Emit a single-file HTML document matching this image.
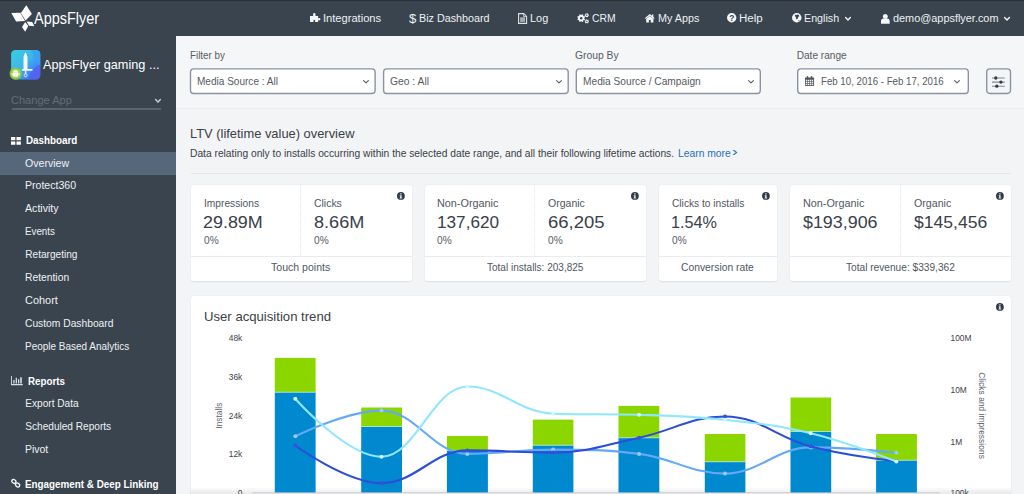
<!DOCTYPE html>
<html lang="en"><head><meta charset="utf-8"><title>AppsFlyer - Overview</title><style>
*{box-sizing:border-box}
html,body{margin:0;padding:0}
body{width:1024px;height:494px;overflow:hidden;position:relative;background:#f3f4f6;font-family:"Liberation Sans",sans-serif}
.t{position:absolute;white-space:nowrap;transform-origin:0 50%;line-height:14px;margin:0;font-weight:400;text-decoration:none}
.i{position:absolute;overflow:visible}
header{position:absolute;left:0;top:0;width:1024px;height:35.6px;background:#3a444f;box-shadow:inset 0 1px 0 #2b3138}
aside{position:absolute;left:0;top:0;width:176px;height:494px;background:#3a444f}
ul{margin:0;padding:0;list-style:none}
main,section,nav{display:block}
.active{position:absolute;left:0;top:152.2px;width:176px;height:22.6px;background:#57677b}
.underline{position:absolute;left:11.500px;top:108px;width:149.800px;height:2px;background:#586370}
.filterbar{position:absolute;left:176px;top:35.6px;width:848px;height:73.4px;background:#f5f6f8;border-bottom:1px solid #e9ebee}
hr{position:absolute;left:190.500px;top:172.600px;width:820.500px;height:1px;border:0;margin:0;background:#e3e5e8}
.card{position:absolute;top:184.600px;height:96px;background:#fff;border-radius:3px;box-shadow:0 0.5px 1.5px rgba(40,50,60,.10)}
.vd{position:absolute;top:184.600px;height:71.600px;width:0;border-left:1px dotted #e3e6e9}
.hd{position:absolute;top:256px;height:1px;background:#e9ebee}
.chartcard{position:absolute;left:190.500px;top:296.200px;width:820.500px;height:210px;background:#fff;border-radius:3px;box-shadow:0 0.5px 1.5px rgba(40,50,60,.10)}
</style></head><body>
<aside><div class="active"></div><div class="underline"></div><svg class="i" style="left:9px;top:50px" width="32" height="31" viewBox="9 50 32 31">
<defs><linearGradient id="ag" x1="0" y1="0" x2="1" y2="1"><stop offset="0" stop-color="#35d0df"/><stop offset=".45" stop-color="#3fb6ea"/><stop offset=".75" stop-color="#3b86f2"/><stop offset="1" stop-color="#5a5cf0"/></linearGradient><clipPath id="ac"><rect x="11.100" y="50.100" width="29.200" height="29.400" rx="4.200"/></clipPath></defs>
<rect x="11.100" y="50.100" width="29.200" height="29.400" rx="4.200" fill="url(#ag)"/>
<g clip-path="url(#ac)"><path d="M30 50 C36 55 33 64 41 66 V50z" fill="#3aa0f4" opacity=".8"/><path d="M28 80 C30 70 36 66 41 64 V80z" fill="#5561ee" opacity=".85"/></g>
<path d="M25.500 52.600 C26.800 54.500 27.500 56 27.500 58 V69 H23.500 V58 C23.500 56 24.200 54.500 25.500 52.600z" fill="#f3f7ff"/>
<rect x="21.800" y="69" width="10.800" height="1.700" rx=".8" fill="#f3f7ff"/><rect x="24.800" y="70.500" width="1.600" height="3.600" fill="#e4ecff"/><circle cx="25.600" cy="75.300" r="1.500" fill="none" stroke="#e4ecff" stroke-width=".9"/>
<circle cx="15.700" cy="73.600" r="6.100" fill="#8dc73f"/><circle cx="15.700" cy="73.600" r="4.600" fill="#a4d455"/>
<path d="M13 72.700a2.600 2.700 0 0 1 5.200 0z M13 73.100h5.200v3a.6.6 0 0 1-.6.600h-4a.6.6 0 0 1-.600-.600z" fill="#f4fbe8"/><rect x="11.700" y="73.100" width=".950" height="2.700" rx=".450" fill="#f4fbe8"/><rect x="18.550" y="73.100" width=".950" height="2.700" rx=".450" fill="#f4fbe8"/>
</svg><span class="t" style="left:43.24px;top:58.00px;font-size:12.6px;color:#fff;transform:scaleX(1.009);">AppsFlyer gaming ...</span><span class="t" style="left:11.06px;top:93.00px;font-size:10.6px;color:#606c78;transform:scaleX(1.042);">Change App</span><ul><li class="t" style="left:25.69px;top:133.50px;font-size:10.1px;color:#fff;font-weight:700;transform:scaleX(0.973);">Dashboard</li><li class="t" style="left:25.29px;top:156.50px;font-size:10.1px;color:#eef1f4;transform:scaleX(1.048);">Overview</li><li class="t" style="left:25.29px;top:178.50px;font-size:10.1px;color:#eef1f4;transform:scaleX(1.045);">Protect360</li><li class="t" style="left:25.29px;top:201.50px;font-size:10.1px;color:#eef1f4;transform:scaleX(1.051);">Activity</li><li class="t" style="left:25.29px;top:224.50px;font-size:10.1px;color:#eef1f4;transform:scaleX(0.969);">Events</li><li class="t" style="left:25.29px;top:247.50px;font-size:10.1px;color:#eef1f4;">Retargeting</li><li class="t" style="left:25.29px;top:270.50px;font-size:10.1px;color:#eef1f4;transform:scaleX(1.021);">Retention</li><li class="t" style="left:25.29px;top:293.50px;font-size:10.1px;color:#eef1f4;transform:scaleX(1.083);">Cohort</li><li class="t" style="left:25.29px;top:316.50px;font-size:10.1px;color:#eef1f4;transform:scaleX(1.017);">Custom Dashboard</li><li class="t" style="left:25.29px;top:339.50px;font-size:10.1px;color:#eef1f4;transform:scaleX(0.987);">People Based Analytics</li><li class="t" style="left:27.69px;top:374.50px;font-size:10.1px;color:#fff;font-weight:700;transform:scaleX(0.968);">Reports</li><li class="t" style="left:25.29px;top:396.50px;font-size:10.1px;color:#eef1f4;">Export Data</li><li class="t" style="left:25.29px;top:419.50px;font-size:10.1px;color:#eef1f4;">Scheduled Reports</li><li class="t" style="left:25.29px;top:442.50px;font-size:10.1px;color:#eef1f4;transform:scaleX(1.034);">Pivot</li><li class="t" style="left:25.29px;top:477.50px;font-size:10.1px;color:#fff;font-weight:700;transform:scaleX(0.976);">Engagement &amp; Deep Linking</li></ul><svg class="i" style="left:155.2px;top:99.0px" width="6.0" height="3.7" viewBox="0 0 6.0 3.7" ><path d="M0.6 0.6 L3.0 3.1 L5.4 0.6" fill="none" stroke="#c3c9d0" stroke-width="1.5" stroke-linecap="round" stroke-linejoin="round"/></svg><svg class="i" style="left:11.1px;top:136.6px" width="9.9" height="7.7" viewBox="0 0 9.900 7.700" ><path fill="#fff" d="M0 0h4.300v3.300h-4.300zM5.500 0h4.400v3.300h-4.400zM0 4.400h4.300v3.300h-4.300zM5.500 4.400h4.400v3.300h-4.400z"/></svg><svg class="i" style="left:11px;top:376.4px" width="11.8" height="9.2" viewBox="0 0 11.800 9.200" ><path fill="#d9dde2" d="M0 0h.9v8h10.900v1.200h-11.800zM2.300 4.100h1.300v3.500h-1.300zM4.700 1.800h1.300v5.800h-1.300zM7 3.300h1.300v4.300h-1.300zM9.200 1.300h1.600v6.300h-1.600z"/></svg><svg class="i" style="left:11px;top:479.4px" width="9.6" height="8.6" viewBox="0 0 9.600 8.600" ><g fill="none" stroke="#fff" stroke-width="1.300"><rect x=".7" y=".7" width="4.400" height="3.400" rx="1.700" transform="rotate(35 2.900 2.400)"/><rect x="4.400" y="4.300" width="4.400" height="3.400" rx="1.700" transform="rotate(35 6.600 6)"/></g></svg></aside>
<header><svg class="i" style="left:11px;top:5px" width="24" height="27" viewBox="11 5 24 27" ><g fill="#fff"><path d="M26.300 5.200 L31.900 14 L25.600 20.400 L20.900 12.900z"/><path d="M11.300 12.900 L20.300 12.700 L25 20.900 L16.100 21.500z"/><path d="M25.200 22 L28.300 26 L25.200 31.700 L22 26.900z"/><path d="M26.500 21.500 L32.200 22 L34.400 26.300 L29.100 25.800z"/></g></svg><span class="t" style="left:34.03px;top:11.00px;font-size:16.2px;color:#fff;transform:scaleX(0.894);">AppsFlyer</span><nav><span class="t" style="left:323.40px;top:11.50px;font-size:10.0px;color:#eef1f4;transform:scaleX(1.112);">Integrations</span><span class="t" style="left:409.44px;top:12.00px;font-size:12.6px;color:#eef1f4;transform:scaleX(1.042);">$</span><span class="t" style="left:419.10px;top:11.50px;font-size:10.0px;color:#eef1f4;transform:scaleX(1.075);">Biz Dashboard</span><span class="t" style="left:530.40px;top:11.50px;font-size:10.0px;color:#eef1f4;transform:scaleX(1.091);">Log</span><span class="t" style="left:592.40px;top:11.50px;font-size:10.0px;color:#eef1f4;transform:scaleX(1.036);">CRM</span><span class="t" style="left:657.70px;top:11.50px;font-size:10.0px;color:#eef1f4;transform:scaleX(1.077);">My Apps</span><span class="t" style="left:739.40px;top:11.50px;font-size:10.0px;color:#eef1f4;transform:scaleX(1.152);">Help</span><span class="t" style="left:804.40px;top:11.50px;font-size:10.0px;color:#eef1f4;transform:scaleX(1.070);">English</span><span class="t" style="left:893.10px;top:11.50px;font-size:10.0px;color:#eef1f4;transform:scaleX(1.089);">demo@appsflyer.com</span><svg class="i" style="left:309.6px;top:13px" width="10.4" height="8.9" viewBox="0 0 10.4 8.9" ><path fill="#f4f6f8" d="M0 3h3.1v-1.6a1.2 1.4 0 1 1 2.4 0v1.6h2.6v2.2h1a1 1.1 0 1 1 0 2.1h-1v1.6h-3v-1.3a0.8 0.9 0 1 0-1.6 0v1.3h-3.5z"/></svg><svg class="i" style="left:517.9px;top:12.9px" width="9.2" height="11" viewBox="0 0 9.200 11" ><path fill="none" stroke="#dde1e5" stroke-width="1.1" d="M0.600 0.600h5.200l2.800 2.800v7h-8z"/><path fill="none" stroke="#dde1e5" stroke-width="0.8" d="M5.600 0.800v2.800h2.800"/><rect x="2.100" y="4.300" width="5" height="4.600" fill="#a4abb3"/></svg><svg class="i" style="left:577px;top:13px" width="12" height="10.5" viewBox="0 0 12 10.5" ><path fill="#f4f6f8" fill-rule="evenodd" d="M7.32 5.64 L8.10 6.07 L7.58 7.34 L6.72 7.09 L6.09 7.72 L6.34 8.58 L5.07 9.10 L4.64 8.32 L3.76 8.32 L3.33 9.10 L2.06 8.58 L2.31 7.72 L1.68 7.09 L0.82 7.34 L0.30 6.07 L1.08 5.64 L1.08 4.76 L0.30 4.33 L0.82 3.06 L1.68 3.31 L2.31 2.68 L2.06 1.82 L3.33 1.30 L3.76 2.08 L4.64 2.08 L5.07 1.30 L6.34 1.82 L6.09 2.68 L6.72 3.31 L7.58 3.06 L8.10 4.33 L7.32 4.76z M5.50 5.20 A1.3 1.3 0 1 0 2.90 5.20 A1.3 1.3 0 1 0 5.50 5.20z M11.36 1.76 L11.89 1.81 L11.89 2.79 L11.36 2.84 L11.05 3.38 L11.27 3.87 L10.42 4.36 L10.11 3.92 L9.49 3.92 L9.18 4.36 L8.33 3.87 L8.55 3.38 L8.24 2.84 L7.71 2.79 L7.71 1.81 L8.24 1.76 L8.55 1.22 L8.33 0.73 L9.18 0.24 L9.49 0.68 L10.11 0.68 L10.42 0.24 L11.27 0.73 L11.05 1.22z M10.50 2.30 A0.7 0.7 0 1 0 9.10 2.30 A0.7 0.7 0 1 0 10.50 2.30z M11.45 8.34 L11.94 8.55 L11.65 9.49 L11.13 9.38 L10.67 9.80 L10.74 10.33 L9.79 10.55 L9.62 10.04 L9.03 9.86 L8.60 10.18 L7.93 9.46 L8.29 9.06 L8.15 8.46 L7.66 8.25 L7.95 7.31 L8.47 7.42 L8.93 7.00 L8.86 6.47 L9.81 6.25 L9.98 6.76 L10.57 6.94 L11.00 6.62 L11.67 7.34 L11.31 7.74z M10.50 8.40 A0.7 0.7 0 1 0 9.10 8.40 A0.7 0.7 0 1 0 10.50 8.40z"/></svg><svg class="i" style="left:644.5px;top:13.9px" width="9.6" height="8.4" viewBox="0 0 9.600 8.400" ><path fill="#f4f6f8" d="M4.800 0L9.600 4 8.800 5 4.800 1.700.800 5 0 4z"/><path fill="#f4f6f8" d="M4.800 2.100L8.400 5.100V8.400H5.700V6H3.900V8.400H1.200V5.100z"/><rect x="6.900" y=".500" width="1.400" height="2.600" fill="#f4f6f8"/></svg><svg class="i" style="left:727.1px;top:13.4px" width="9.4" height="9.4" viewBox="0 0 9.4 9.4" ><circle cx="4.7" cy="4.7" r="4.7" fill="#f4f6f8"/><text x="4.7" y="7.7" font-size="8.4" font-weight="700" text-anchor="middle" fill="#3a444f" font-family="Liberation Sans, sans-serif">?</text></svg><svg class="i" style="left:791.8px;top:13.2px" width="9.5" height="9.5" viewBox="0 0 9.500 9.500" ><circle cx="4.750" cy="4.750" r="4.750" fill="#f4f6f8"/><path fill="#3a444f" d="M2.900 1.700l1.500.300.900-.600 1.600.500.300 1.300-1 .800-.300 1.400-1.200 1.100-.800-1.300-.100-1.300-.900-.800zM6.200 7.200l1-.300.300.700-.800.700z"/></svg><svg class="i" style="left:881.1px;top:13.5px" width="8.7" height="9.7" viewBox="0 0 8.700 9.700" ><circle cx="4.350" cy="2.550" r="2.500" fill="#f4f6f8"/><path fill="#f4f6f8" d="M0 9.700v-2.600c0-1.700 1.100-2.700 2.300-2.700h4.100c1.200 0 2.300 1 2.300 2.700v2.600z"/></svg><svg class="i" style="left:845.1px;top:17.2px" width="6.0" height="3.7" viewBox="0 0 6.0 3.7" ><path d="M0.6 0.6 L3.0 3.1 L5.4 0.6" fill="none" stroke="#f4f6f8" stroke-width="1.4" stroke-linecap="round" stroke-linejoin="round"/></svg><svg class="i" style="left:1004.3px;top:17.2px" width="6.0" height="3.7" viewBox="0 0 6.0 3.7" ><path d="M0.6 0.6 L3.0 3.1 L5.4 0.6" fill="none" stroke="#f4f6f8" stroke-width="1.4" stroke-linecap="round" stroke-linejoin="round"/></svg></nav></header>
<main>
<section class="filterbar"></section>
<svg class="i" style="left:176px;top:60px" width="848" height="40" viewBox="176 60 848 40"><rect x="190.5" y="68.9" width="184.6" height="24.6" rx="3.2" fill="#fff" stroke="#8a93a1" stroke-width="1.4"/><rect x="383.6" y="68.9" width="184.6" height="24.6" rx="3.2" fill="#fff" stroke="#8a93a1" stroke-width="1.4"/><rect x="576.3" y="68.9" width="184.0" height="24.6" rx="3.2" fill="#fff" stroke="#8a93a1" stroke-width="1.4"/><rect x="797.7" y="68.9" width="170.6" height="24.6" rx="3.2" fill="#fff" stroke="#8a93a1" stroke-width="1.4"/><rect x="986.7" y="68.9" width="23.8" height="24.6" rx="3.4" fill="#f4f5f7" stroke="#8a93a1" stroke-width="1.4"/></svg>
<span class="t" style="left:189.99px;top:48.50px;font-size:10.1px;color:#555b63;transform:scaleX(0.972);">Filter by</span><span class="t" style="left:574.99px;top:48.50px;font-size:10.1px;color:#555b63;transform:scaleX(1.023);">Group By</span><span class="t" style="left:796.69px;top:48.50px;font-size:10.1px;color:#555b63;">Date range</span><span class="t" style="left:197.39px;top:74.50px;font-size:10.1px;color:#555b63;transform:scaleX(0.995);">Media Source : All</span><span class="t" style="left:390.19px;top:74.50px;font-size:10.1px;color:#555b63;transform:scaleX(1.022);">Geo : All</span><span class="t" style="left:582.89px;top:74.50px;font-size:10.1px;color:#555b63;transform:scaleX(1.009);">Media Source / Campaign</span><span class="t" style="left:820.89px;top:74.50px;font-size:10.1px;color:#555b63;transform:scaleX(0.959);">Feb 10, 2016 - Feb 17, 2016</span>
<section><h1 class="t" style="left:189.84px;top:127.00px;font-size:12.6px;color:#3a4047;transform:scaleX(1.023);">LTV (lifetime value) overview</h1><p class="t" style="left:189.99px;top:146.50px;font-size:10.1px;color:#3a4047;transform:scaleX(1.015);">Data relating only to installs occurring within the selected date range, and all their following lifetime actions.</p><a class="t" style="left:677.59px;top:146.50px;font-size:10.1px;color:#1f6fc4;transform:scaleX(1.021);">Learn more</a><span class="t" style="left:732.48px;top:145.00px;font-size:12px;color:#1f6fc4;transform:scaleX(1.435);">›</span><hr></section>
<section>
<div class="card" style="left:190.5px;width:221.5px"></div><div class="hd" style="left:190.5px;width:221.5px"></div>
<div class="card" style="left:424.5px;width:221.2px"></div><div class="hd" style="left:424.5px;width:221.2px"></div>
<div class="card" style="left:658.8px;width:118px"></div><div class="hd" style="left:658.8px;width:118px"></div>
<div class="card" style="left:789.6px;width:221.4px"></div><div class="hd" style="left:789.6px;width:221.4px"></div>
<div class="vd" style="left:300px"></div>
<div class="vd" style="left:534px"></div>
<div class="vd" style="left:900px"></div>
<span class="t" style="left:203.59px;top:196.50px;font-size:10.1px;color:#50575f;transform:scaleX(1.011);">Impressions</span><span class="t" style="left:202.98px;top:215.50px;font-size:17.07px;color:#38404a;transform:scaleX(1.050);">29.89M</span><span class="t" style="left:203.59px;top:233.50px;font-size:10.2px;color:#555d67;transform:scaleX(0.993);">0%</span><span class="t" style="left:314.39px;top:196.50px;font-size:10.1px;color:#50575f;transform:scaleX(1.033);">Clicks</span><span class="t" style="left:313.98px;top:215.50px;font-size:17.07px;color:#38404a;transform:scaleX(1.060);">8.66M</span><span class="t" style="left:314.39px;top:233.50px;font-size:10.2px;color:#555d67;transform:scaleX(0.993);">0%</span><span class="t" style="left:271.39px;top:260.50px;font-size:10.1px;color:#50575f;transform:scaleX(1.045);">Touch points</span><span class="t" style="left:437.39px;top:196.50px;font-size:10.1px;color:#50575f;transform:scaleX(1.073);">Non-Organic</span><span class="t" style="left:436.98px;top:215.50px;font-size:17.07px;color:#38404a;transform:scaleX(1.006);">137,620</span><span class="t" style="left:437.39px;top:233.50px;font-size:10.2px;color:#555d67;transform:scaleX(0.993);">0%</span><span class="t" style="left:548.29px;top:196.50px;font-size:10.1px;color:#50575f;transform:scaleX(1.042);">Organic</span><span class="t" style="left:547.88px;top:215.50px;font-size:17.07px;color:#38404a;transform:scaleX(1.084);">66,205</span><span class="t" style="left:548.29px;top:233.50px;font-size:10.2px;color:#555d67;transform:scaleX(0.993);">0%</span><span class="t" style="left:486.79px;top:260.50px;font-size:10.1px;color:#50575f;transform:scaleX(0.993);">Total installs: 203,825</span><span class="t" style="left:671.89px;top:196.50px;font-size:10.1px;color:#50575f;transform:scaleX(1.009);">Clicks to installs</span><span class="t" style="left:671.48px;top:215.50px;font-size:17.07px;color:#38404a;transform:scaleX(0.950);">1.54%</span><span class="t" style="left:671.89px;top:233.50px;font-size:10.2px;color:#555d67;transform:scaleX(0.993);">0%</span><span class="t" style="left:680.99px;top:260.50px;font-size:10.1px;color:#50575f;transform:scaleX(1.022);">Conversion rate</span><span class="t" style="left:803.09px;top:196.50px;font-size:10.1px;color:#50575f;transform:scaleX(1.071);">Non-Organic</span><span class="t" style="left:802.68px;top:215.50px;font-size:17.07px;color:#38404a;transform:scaleX(1.047);">$193,906</span><span class="t" style="left:914.09px;top:196.50px;font-size:10.1px;color:#50575f;transform:scaleX(1.053);">Organic</span><span class="t" style="left:913.68px;top:215.50px;font-size:17.07px;color:#38404a;transform:scaleX(1.029);">$145,456</span><span class="t" style="left:845.79px;top:260.50px;font-size:10.1px;color:#50575f;transform:scaleX(1.005);">Total revenue: $339,362</span>
</section>
<section><div class="chartcard"></div><h2 class="t" style="left:204.24px;top:310.00px;font-size:12.6px;color:#3a4047;transform:scaleX(1.043);">User acquisition trend</h2><svg class="i" style="left:190px;top:296px" width="821" height="198" viewBox="190 296 821 198">
<defs><linearGradient id="fd" x1="0" y1="0" x2="0" y2="1"><stop offset="0" stop-color="#000" stop-opacity="0"/><stop offset="1" stop-color="#000" stop-opacity=".09"/></linearGradient></defs>
<rect x="190.500" y="487" width="820.500" height="7" fill="url(#fd)"/>
<rect x="274.8" y="357.9" width="40.8" height="34.3" fill="#8cd600"/>
<rect x="274.8" y="392.2" width="40.8" height="100.8" fill="#0089cf"/>
<rect x="274.8" y="391.8" width="40.8" height="0.8" fill="#bfe9d0"/>
<rect x="361.2" y="407.5" width="40.8" height="19.1" fill="#8cd600"/>
<rect x="361.2" y="426.6" width="40.8" height="66.4" fill="#0089cf"/>
<rect x="361.2" y="426.2" width="40.8" height="0.8" fill="#bfe9d0"/>
<rect x="446.9" y="436.0" width="41.0" height="14.4" fill="#8cd600"/>
<rect x="446.9" y="450.4" width="41.0" height="42.6" fill="#0089cf"/>
<rect x="446.9" y="450.0" width="41.0" height="0.8" fill="#bfe9d0"/>
<rect x="532.8" y="419.6" width="40.6" height="25.6" fill="#8cd600"/>
<rect x="532.8" y="445.2" width="40.6" height="47.8" fill="#0089cf"/>
<rect x="532.8" y="444.8" width="40.6" height="0.8" fill="#bfe9d0"/>
<rect x="618.5" y="405.9" width="40.8" height="31.9" fill="#8cd600"/>
<rect x="618.5" y="437.8" width="40.8" height="55.2" fill="#0089cf"/>
<rect x="618.5" y="437.4" width="40.8" height="0.8" fill="#bfe9d0"/>
<rect x="704.8" y="434.0" width="40.6" height="27.8" fill="#8cd600"/>
<rect x="704.8" y="461.8" width="40.6" height="31.2" fill="#0089cf"/>
<rect x="704.8" y="461.4" width="40.6" height="0.8" fill="#bfe9d0"/>
<rect x="790.5" y="397.5" width="40.7" height="34.1" fill="#8cd600"/>
<rect x="790.5" y="431.6" width="40.7" height="61.4" fill="#0089cf"/>
<rect x="790.5" y="431.2" width="40.7" height="0.8" fill="#bfe9d0"/>
<rect x="876.1" y="434.0" width="40.8" height="26.2" fill="#8cd600"/>
<rect x="876.1" y="460.2" width="40.8" height="32.8" fill="#0089cf"/>
<rect x="876.1" y="459.8" width="40.8" height="0.8" fill="#bfe9d0"/>
<path d="M252.600 492.800H939.300" stroke="#c9ccd2" stroke-width="0.9"/>
<path d="M295.3 436.3 C295.3 436.3 347.0 410.6 381.5 410.6 C415.8 410.6 433.0 453.9 467.3 453.9 C501.6 453.9 518.8 449.6 553.1 449.6 C587.5 449.6 604.7 449.6 639.1 453.9 C673.5 458.2 690.6 473.6 725.0 473.6 C759.2 473.6 776.4 447.4 810.6 447.4 C844.9 447.4 896.4 452.8 896.4 452.8" fill="none" stroke="#64a9f5" stroke-width="2.100" stroke-linecap="round" stroke-linejoin="round"/>
<circle cx="295.3" cy="436.3" r="2" fill="#9ccaf8"/>
<circle cx="381.5" cy="410.6" r="2" fill="#9ccaf8"/>
<circle cx="467.3" cy="453.9" r="2" fill="#9ccaf8"/>
<circle cx="553.1" cy="449.6" r="2" fill="#9ccaf8"/>
<circle cx="639.1" cy="453.9" r="2" fill="#9ccaf8"/>
<circle cx="725.0" cy="473.6" r="2" fill="#9ccaf8"/>
<circle cx="810.6" cy="447.4" r="2" fill="#9ccaf8"/>
<circle cx="896.4" cy="452.8" r="2" fill="#9ccaf8"/>
<path d="M295.3 445.5 C295.3 445.5 347.0 483.1 381.5 483.1 C415.8 483.1 433.0 450.4 467.3 450.4 C501.6 450.4 518.8 452.6 553.1 452.6 C587.5 452.6 604.7 444.9 639.1 437.7 C673.5 430.5 690.6 416.5 725.0 416.5 C759.2 416.5 776.4 437.5 810.6 446.4 C844.9 455.4 896.4 461.2 896.4 461.2" fill="none" stroke="#2c4dd8" stroke-width="2.100" stroke-linecap="round" stroke-linejoin="round"/>
<circle cx="295.3" cy="445.5" r="2" fill="#3553da"/>
<circle cx="381.5" cy="483.1" r="2" fill="#3553da"/>
<circle cx="467.3" cy="450.4" r="2" fill="#3553da"/>
<circle cx="553.1" cy="452.6" r="2" fill="#3553da"/>
<circle cx="639.1" cy="437.7" r="2" fill="#3553da"/>
<circle cx="725.0" cy="416.5" r="2" fill="#3553da"/>
<circle cx="810.6" cy="446.4" r="2" fill="#3553da"/>
<circle cx="896.4" cy="461.2" r="2" fill="#3553da"/>
<path d="M295.3 398.7 C295.3 398.7 347.0 456.8 381.5 456.8 C415.8 456.8 433.0 386.5 467.3 386.5 C501.6 386.5 518.8 412.6 553.1 413.7 C587.5 414.8 604.7 413.7 639.1 414.8 C673.5 415.9 690.6 416.1 725.0 419.8 C759.2 423.5 776.4 424.9 810.6 433.3 C844.9 441.7 896.4 461.6 896.4 461.6" fill="none" stroke="#8fe6ff" stroke-width="2.100" stroke-linecap="round" stroke-linejoin="round"/>
<circle cx="295.3" cy="398.7" r="2" fill="#d5f5ff"/>
<circle cx="381.5" cy="456.8" r="2" fill="#d5f5ff"/>
<circle cx="467.3" cy="386.5" r="2" fill="#d5f5ff"/>
<circle cx="553.1" cy="413.7" r="2" fill="#d5f5ff"/>
<circle cx="639.1" cy="414.8" r="2" fill="#d5f5ff"/>
<circle cx="725.0" cy="419.8" r="2" fill="#d5f5ff"/>
<circle cx="810.6" cy="433.3" r="2" fill="#d5f5ff"/>
<circle cx="896.4" cy="461.6" r="2" fill="#d5f5ff"/>
<text x="242.300" y="341.3" text-anchor="end" font-family="Liberation Sans, sans-serif" font-size="8.400" fill="#3d4349">48k</text>
<text x="242.300" y="380.0" text-anchor="end" font-family="Liberation Sans, sans-serif" font-size="8.400" fill="#3d4349">36k</text>
<text x="242.300" y="418.7" text-anchor="end" font-family="Liberation Sans, sans-serif" font-size="8.400" fill="#3d4349">24k</text>
<text x="242.300" y="457.4" text-anchor="end" font-family="Liberation Sans, sans-serif" font-size="8.400" fill="#3d4349">12k</text>
<text x="242.300" y="496.0" text-anchor="end" font-family="Liberation Sans, sans-serif" font-size="8.400" fill="#3d4349">0</text>
<text x="950.500" y="341.0" font-family="Liberation Sans, sans-serif" font-size="8.400" fill="#3d4349">100M</text>
<text x="950.500" y="393.0" font-family="Liberation Sans, sans-serif" font-size="8.400" fill="#3d4349">10M</text>
<text x="950.500" y="444.6" font-family="Liberation Sans, sans-serif" font-size="8.400" fill="#3d4349">1M</text>
<text x="950.500" y="496.0" font-family="Liberation Sans, sans-serif" font-size="8.400" fill="#3d4349">100k</text>
<text transform="translate(221.600 415.700) rotate(-90)" text-anchor="middle" font-family="Liberation Sans, sans-serif" font-size="8.300" fill="#5b6168" textLength="26" lengthAdjust="spacing">Installs</text>
<text transform="translate(978.800 415.500) rotate(90)" text-anchor="middle" font-family="Liberation Sans, sans-serif" font-size="8.300" fill="#5b6168" textLength="86.600" lengthAdjust="spacing">Clicks and impressions</text>
</svg></section>
<svg class="i" style="left:362.6px;top:80.3px" width="6.0" height="3.5" viewBox="0 0 6.0 3.5" ><path d="M0.6 0.6 L3.0 2.9 L5.4 0.6" fill="none" stroke="#5a6068" stroke-width="1.15" stroke-linecap="round" stroke-linejoin="round"/></svg><svg class="i" style="left:555.7px;top:80.3px" width="6.0" height="3.5" viewBox="0 0 6.0 3.5" ><path d="M0.6 0.6 L3.0 2.9 L5.4 0.6" fill="none" stroke="#5a6068" stroke-width="1.15" stroke-linecap="round" stroke-linejoin="round"/></svg><svg class="i" style="left:748.0px;top:80.3px" width="6.0" height="3.5" viewBox="0 0 6.0 3.5" ><path d="M0.6 0.6 L3.0 2.9 L5.4 0.6" fill="none" stroke="#5a6068" stroke-width="1.15" stroke-linecap="round" stroke-linejoin="round"/></svg><svg class="i" style="left:954.0px;top:80.3px" width="6.0" height="3.5" viewBox="0 0 6.0 3.5" ><path d="M0.6 0.6 L3.0 2.9 L5.4 0.6" fill="none" stroke="#5a6068" stroke-width="1.15" stroke-linecap="round" stroke-linejoin="round"/></svg><svg class="i" style="left:804.9px;top:76.0px" width="9.1" height="9.9" viewBox="0 0 9.100 9.900" ><rect x="0" y="1.500" width="9.100" height="8.400" rx=".600" fill="#4a525c"/><rect x="0.75" y="3.70" width="1.500" height="1.500" fill="#eef0f2"/><rect x="2.75" y="3.70" width="1.500" height="1.500" fill="#eef0f2"/><rect x="4.75" y="3.70" width="1.500" height="1.500" fill="#eef0f2"/><rect x="6.75" y="3.70" width="1.500" height="1.500" fill="#eef0f2"/><rect x="0.75" y="5.70" width="1.500" height="1.500" fill="#eef0f2"/><rect x="2.75" y="5.70" width="1.500" height="1.500" fill="#eef0f2"/><rect x="4.75" y="5.70" width="1.500" height="1.500" fill="#eef0f2"/><rect x="6.75" y="5.70" width="1.500" height="1.500" fill="#eef0f2"/><rect x="0.75" y="7.70" width="1.500" height="1.500" fill="#eef0f2"/><rect x="2.75" y="7.70" width="1.500" height="1.500" fill="#eef0f2"/><rect x="4.75" y="7.70" width="1.500" height="1.500" fill="#eef0f2"/><rect x="6.75" y="7.70" width="1.500" height="1.500" fill="#eef0f2"/><rect x="1.900" y="0" width="1.300" height="2.500" rx=".600" fill="#4a525c"/><rect x="5.900" y="0" width="1.300" height="2.500" rx=".600" fill="#4a525c"/></svg><svg class="i" style="left:992.2px;top:75.8px" width="12.8" height="12.2" viewBox="0 0 12.800 12.200" ><path stroke="#7f8892" stroke-width="1.1" d="M0 2h12.800M0 6.100h12.800M0 10.200h12.800"/><circle cx="3.800" cy="2" r="1.650" fill="#303a47"/><circle cx="8.900" cy="6.100" r="1.650" fill="#303a47"/><circle cx="4.800" cy="10.200" r="1.650" fill="#303a47"/></svg><svg class="i" style="left:397.0px;top:192.4px" width="7.8" height="7.8" viewBox="0 0 7.800 7.800" ><circle cx="3.900" cy="3.900" r="3.900" fill="#303b49"/><path fill="#e9edf1" d="M3.250 1.350h1.300v1.250h-1.300zM2.700 3.150h1.900v2.550h.55v.9h-2.600v-.9h.6v-1.650h-.45z"/></svg><svg class="i" style="left:630.7px;top:192.4px" width="7.8" height="7.8" viewBox="0 0 7.800 7.800" ><circle cx="3.900" cy="3.900" r="3.900" fill="#303b49"/><path fill="#e9edf1" d="M3.250 1.350h1.300v1.250h-1.300zM2.700 3.150h1.900v2.550h.55v.9h-2.600v-.9h.6v-1.650h-.45z"/></svg><svg class="i" style="left:762.4px;top:192.4px" width="7.8" height="7.8" viewBox="0 0 7.800 7.800" ><circle cx="3.900" cy="3.900" r="3.900" fill="#303b49"/><path fill="#e9edf1" d="M3.250 1.350h1.300v1.250h-1.300zM2.700 3.150h1.900v2.550h.55v.9h-2.600v-.9h.6v-1.650h-.45z"/></svg><svg class="i" style="left:996.4px;top:192.4px" width="7.8" height="7.8" viewBox="0 0 7.800 7.800" ><circle cx="3.900" cy="3.900" r="3.900" fill="#303b49"/><path fill="#e9edf1" d="M3.250 1.350h1.300v1.250h-1.300zM2.700 3.150h1.900v2.550h.55v.9h-2.600v-.9h.6v-1.650h-.45z"/></svg><svg class="i" style="left:996.3000000000001px;top:303.3px" width="7.8" height="7.8" viewBox="0 0 7.800 7.800" ><circle cx="3.900" cy="3.900" r="3.900" fill="#303b49"/><path fill="#e9edf1" d="M3.250 1.350h1.300v1.250h-1.300zM2.700 3.150h1.900v2.550h.55v.9h-2.600v-.9h.6v-1.650h-.45z"/></svg>
</main>
</body></html>
